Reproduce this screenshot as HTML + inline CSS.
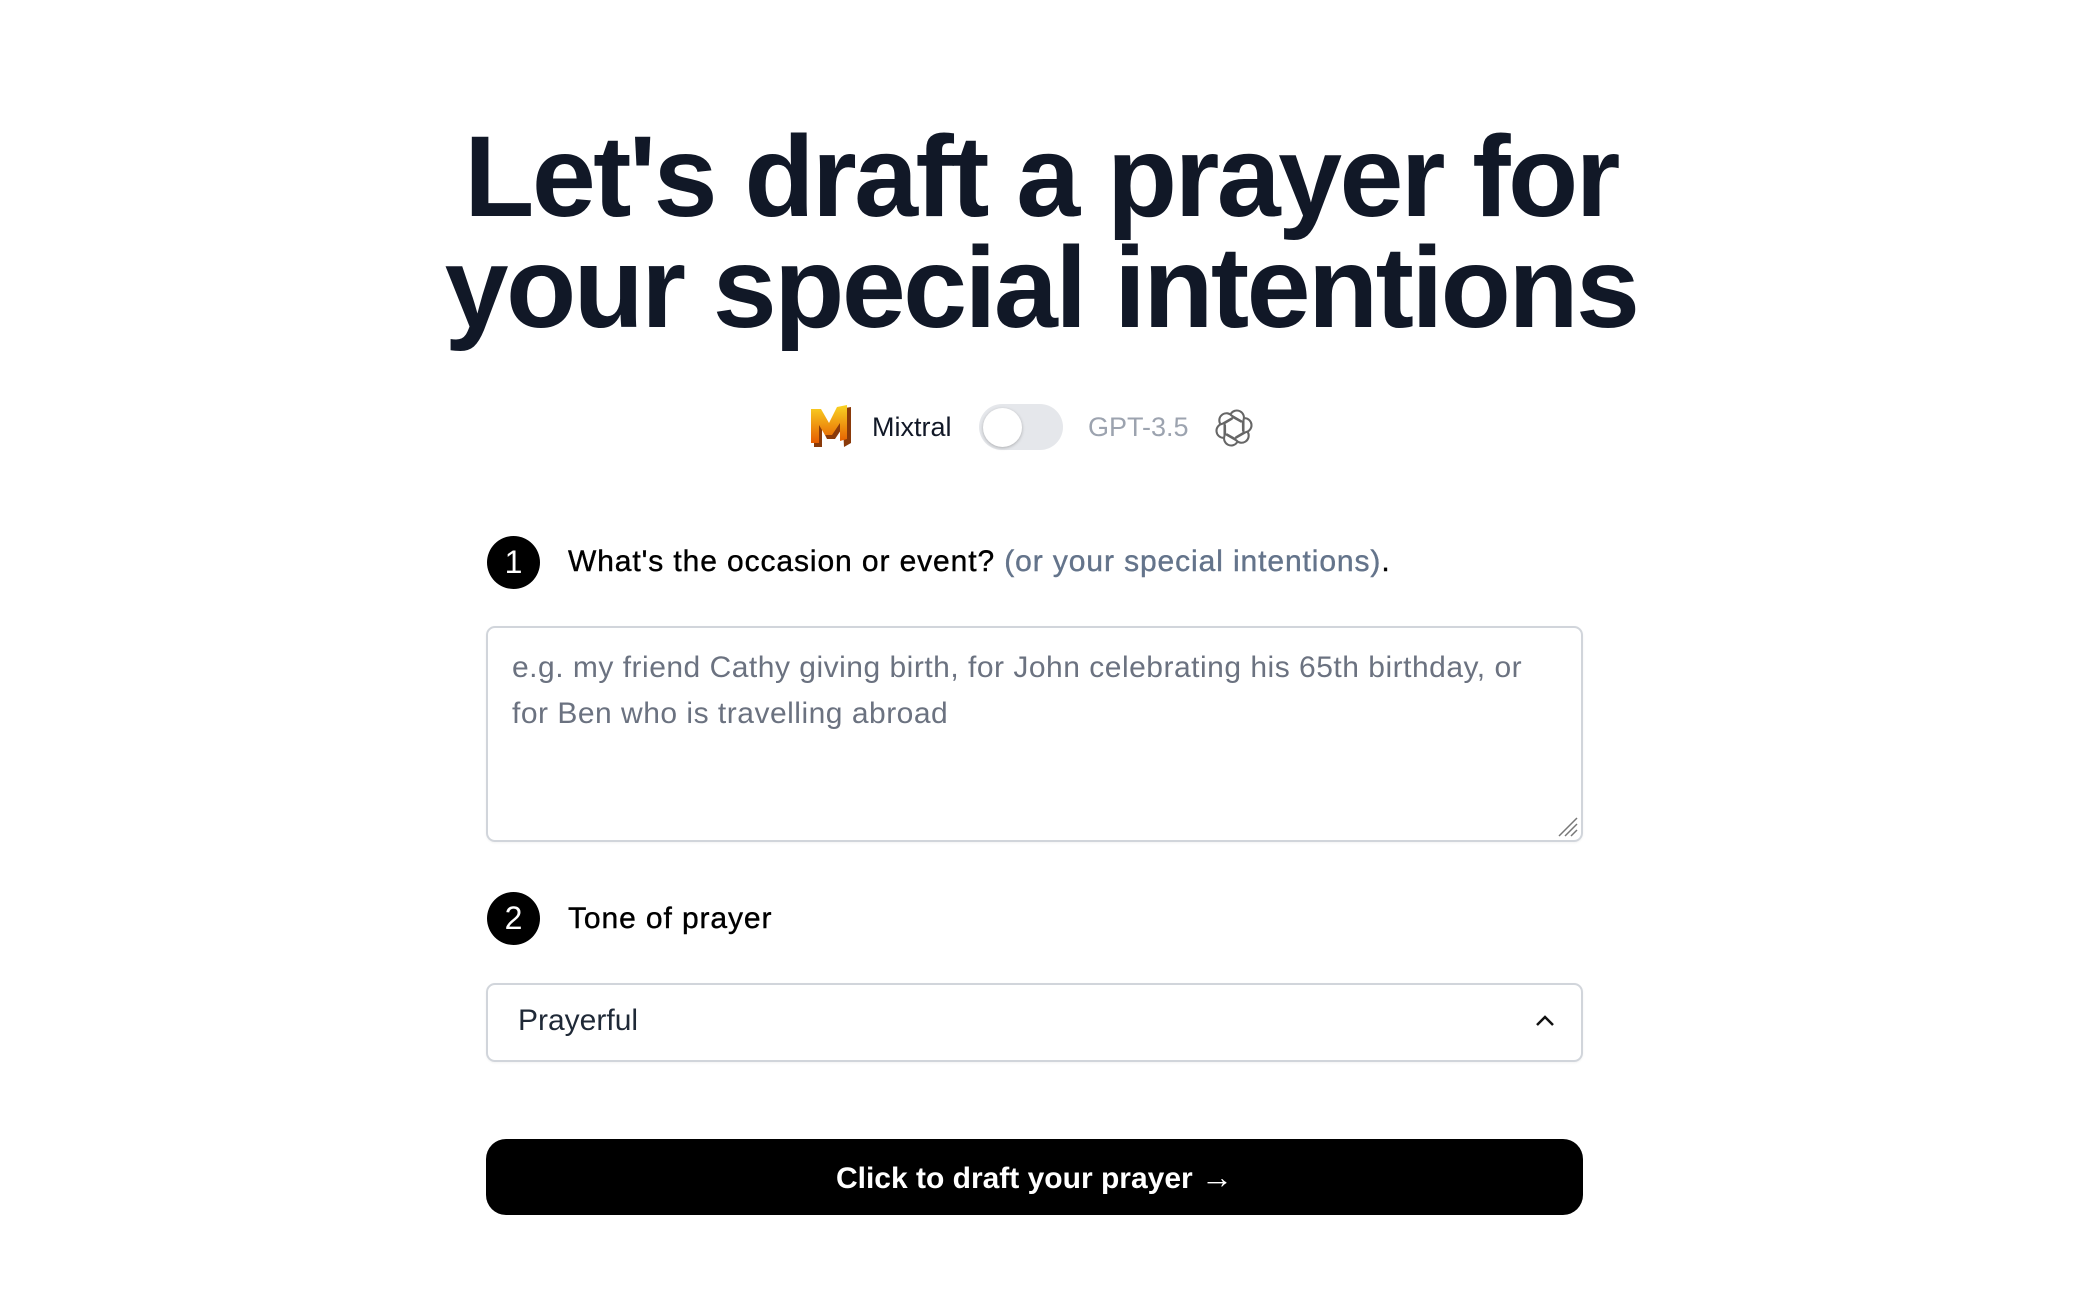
<!DOCTYPE html>
<html><head><meta charset="utf-8"><style>
*{box-sizing:border-box;margin:0;padding:0}
body{width:2082px;height:1301px;background:#fff;font-family:"Liberation Sans",Helvetica,Arial,sans-serif;position:relative;overflow:hidden}
h1{position:absolute;left:0;width:2082px;top:122px;text-align:center;font-size:115px;line-height:111px;font-weight:700;color:#111827;letter-spacing:-2.6px}
.abs{position:absolute}
.step{position:absolute;left:487px;width:53px;height:53px;border-radius:50%;background:#000;color:#fff;font-size:32px;text-align:center;line-height:53px}
.lbl{position:absolute;left:568px;font-size:30px;color:#000;letter-spacing:0.9px;-webkit-text-stroke:0.4px #000}
</style></head><body>
<h1>Let's draft a prayer for<br>your special intentions</h1>

<svg class="abs" style="left:809px;top:403px" width="45" height="46" viewBox="0 0 45 46">
<defs><linearGradient id="g" x1="0" y1="0" x2="0" y2="1"><stop offset="0" stop-color="#f9d423"/><stop offset="1" stop-color="#e65c00"/></linearGradient></defs>
<path d="M5 44 L5 10 L14 10 L22 24 L30 6 L42 4 L42 40 L35 44 L34 24 L26 36 L18 36 L13 26 L13 44Z" fill="#8a3a0a"/>
<path d="M2 40 L2 6 L12 6 L20 20 L28 4 L38 2 L38 36 L31 38 L31 20 L23 32 L16 32 L10 22 L10 40Z" fill="url(#g)"/>
</svg>
<div class="abs" style="left:872px;top:412px;font-size:27px;color:#111827">Mixtral</div>
<div class="abs" style="left:979px;top:404px;width:84px;height:46px;border-radius:23px;background:#e5e7eb"></div>
<div class="abs" style="left:983px;top:408px;width:39px;height:39px;border-radius:50%;background:#fff;box-shadow:0 1px 3px rgba(0,0,0,.25)"></div>
<div class="abs" style="left:1088px;top:412px;font-size:27px;color:#9ca3af">GPT-3.5</div>
<svg class="abs" style="left:1215px;top:409px" width="38" height="38" viewBox="0 0 24 24" fill="none" stroke="#666" stroke-width="1.3">
<g transform="translate(12 12)">
<path d="M-2 -9 A4.5 4.5 0 0 1 6 -5 L6 3 L1 6"/>
<path d="M-2 -9 A4.5 4.5 0 0 1 6 -5 L6 3 L1 6" transform="rotate(60)"/>
<path d="M-2 -9 A4.5 4.5 0 0 1 6 -5 L6 3 L1 6" transform="rotate(120)"/>
<path d="M-2 -9 A4.5 4.5 0 0 1 6 -5 L6 3 L1 6" transform="rotate(180)"/>
<path d="M-2 -9 A4.5 4.5 0 0 1 6 -5 L6 3 L1 6" transform="rotate(240)"/>
<path d="M-2 -9 A4.5 4.5 0 0 1 6 -5 L6 3 L1 6" transform="rotate(300)"/>
</g></svg>

<div class="step" style="top:536px">1</div>
<div class="lbl" style="top:545px">What's the occasion or event? <span style="color:#64748b;-webkit-text-stroke:0.4px #64748b">(or your special intentions)</span>.</div>
<div class="abs" style="left:486px;top:626px;width:1097px;height:216px;border:2px solid #d1d5db;border-radius:9px;padding:17px 24px;font-size:30px;letter-spacing:0.5px;line-height:46px;color:#6b7280;box-shadow:0 1px 2px rgba(0,0,0,.05)">e.g. my friend Cathy giving birth, for John celebrating his 65th birthday, or for Ben who is travelling abroad</div>
<svg class="abs" style="left:1557px;top:816px" width="22" height="22" viewBox="0 0 22 22" stroke="#777" stroke-width="1.5"><line x1="2" y1="20" x2="20" y2="2"/><line x1="8" y1="20" x2="20" y2="8"/><line x1="14" y1="20" x2="20" y2="14"/></svg>

<div class="step" style="top:892px">2</div>
<div class="lbl" style="top:902px">Tone of prayer</div>
<div class="abs" style="left:486px;top:983px;width:1097px;height:79px;border:2px solid #d1d5db;border-radius:9px;box-shadow:0 1px 2px rgba(0,0,0,.05)"></div>
<div class="abs" style="left:518px;top:1004px;font-size:30px;color:#1f2937">Prayerful</div>
<svg class="abs" style="left:1534px;top:1013px" width="22" height="16" viewBox="0 0 22 16" fill="none" stroke="#111" stroke-width="2.5"><path d="M3 12 L11 4 L19 12"/></svg>

<div class="abs" style="left:486px;top:1139px;width:1097px;height:76px;border-radius:20px;background:#000;color:#fff;font-size:30px;font-weight:600;text-align:center;line-height:76px">Click to draft your prayer <b style="font-size:32px">→</b></div>
</body></html>
